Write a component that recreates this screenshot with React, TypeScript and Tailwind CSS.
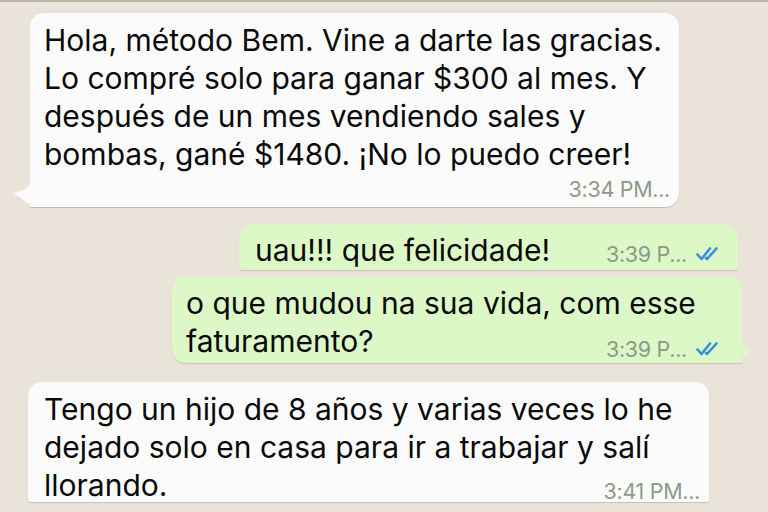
import React from "react";

const font = { fontFamily: "Inter, 'Liberation Sans', sans-serif" };

function Checks() {
  return (
    <svg width="26" height="14" viewBox="0 0 26 14" fill="none" className="ml-[9px]">
      <path d="M1.5 7.5 L5.5 12 L14 1.5" stroke="#3b8de0" strokeWidth="2.6" strokeLinecap="round" strokeLinejoin="round" />
      <path d="M10 11 L11 12 L20.5 1.5" stroke="#3b8de0" strokeWidth="2.6" strokeLinecap="round" strokeLinejoin="round" />
    </svg>
  );
}

function Time({ t, checks }: { t: string; checks?: boolean }) {
  return (
    <div className="flex items-center text-[21.5px] leading-none text-[#8c9a87] tracking-[-0.3px]">
      <span>{t}</span>
      {checks && <Checks />}
    </div>
  );
}

export default function App() {
  return (
    <div className="w-[768px] h-[512px] overflow-hidden bg-[#e9e3da] text-[#0a0a0a]" style={font}>
      <div className="h-[2px] bg-[#bcb7af]" />
      <div className="flex flex-col pt-[11px]">
        {/* Bubble 1 */}
        <div className="relative ml-[30px] w-[649px] h-[194px] bg-[#fbfbfb] rounded-[14px] rounded-bl-none shadow-[0_1px_1px_rgba(0,0,0,0.18)] pl-[14px] pt-[8px]">
          <svg className="absolute left-[-20px] bottom-0" width="30" height="30" viewBox="0 0 30 30">
            <path d="M20 0 L20 4 C20 10 14 15 2 16 C8 18 14 24 20 28 Q22 30 27 30 L30 30 L30 0 Z" fill="#fbfbfb" />
          </svg>
          <div className="relative text-[30px] leading-[38px] whitespace-nowrap">
            Hola, método Bem. Vine a darte las gracias.<br />
            Lo compré solo para ganar $300 al mes. Y<br />
            después de un mes vendiendo sales y<br />
            bombas, gané $1480. ¡No lo puedo creer!
          </div>
          <div className="absolute right-[9px] bottom-[7px]">
            <Time t="3:34 PM..." />
          </div>
        </div>

        {/* Bubble 2 */}
        <div className="relative ml-auto mr-[30px] mt-[17px] w-[499px] h-[46px] bg-[#dcf8c6] rounded-[14px] rounded-b-[4px] shadow-[0_1px_1px_rgba(0,0,0,0.15)] pl-[16px] pt-[7px]">
          <div className="text-[30px] leading-[38px] whitespace-nowrap">uau!!! que felicidade!</div>
          <div className="absolute right-[16px] bottom-[5px]">
            <Time t="3:39 P..." checks />
          </div>
        </div>

        {/* Bubble 3 */}
        <div className="relative ml-auto mr-[26px] mt-[7px] w-[570px] h-[86px] bg-[#dcf8c6] rounded-[14px] rounded-br-none shadow-[0_1px_1px_rgba(0,0,0,0.15)] pl-[14px] pt-[7px]">
          <svg className="absolute right-[-14px] bottom-0" width="30" height="30" viewBox="0 0 30 30">
            <path d="M16 0 L16 6 C16 12 20 16 28 17 C22 19 18 24 12 28 Q10 30 5 30 L0 30 L0 0 Z" fill="#dcf8c6" />
          </svg>
          <div className="relative text-[30px] leading-[38px] whitespace-nowrap">
            o que mudou na sua vida, com esse<br />
            faturamento?
          </div>
          <div className="absolute right-[20px] bottom-[3px]">
            <Time t="3:39 P..." checks />
          </div>
        </div>

        {/* Bubble 4 */}
        <div className="relative ml-[28px] mt-[19px] w-[681px] h-[120px] bg-[#fbfbfb] rounded-[14px] rounded-b-[3px] shadow-[0_1px_1px_rgba(0,0,0,0.15)] pl-[16px] pt-[8px]">
          <div className="text-[30px] leading-[38px] whitespace-nowrap">
            Tengo un hijo de 8 años y varias veces lo he<br />
            dejado solo en casa para ir a trabajar y salí<br />
            llorando.
          </div>
          <div className="absolute right-[9px] bottom-[0px]">
            <Time t="3:41 PM..." />
          </div>
        </div>
      </div>
    </div>
  );
}
